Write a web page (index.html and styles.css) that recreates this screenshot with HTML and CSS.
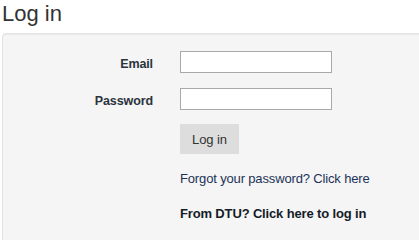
FILE: index.html
```html
<!DOCTYPE html>
<html lang="en">
<head>
<meta charset="utf-8">
<title>Log in</title>
<link rel="stylesheet" href="styles.css">
</head>
<body>
<div class="page">
  <h1 class="title">Log in</h1>
  <div class="well">
    <form class="login-form">
      <label class="field-label" for="email">Email</label>
      <input class="field-input" id="email" type="text">
      <label class="field-label" for="password">Password</label>
      <input class="field-input" id="password" type="password">
      <div class="actions">
        <button class="btn" type="button">Log in</button>
        <a class="link-forgot" href="#">Forgot your password? Click here</a>
        <a class="link-dtu" href="#">From DTU? Click here to log in</a>
      </div>
    </form>
  </div>
</div>
</body>
</html>
```

FILE: styles.css
```css
html, body {
  margin: 0;
  padding: 0;
  overflow: hidden;
  background: #ffffff;
}

body {
  font-family: "Liberation Sans", Arial, Helvetica, sans-serif;
  font-size: 13px;
  line-height: 18px;
  color: #333333;
}

.page {
  padding-left: 2px;
}

.title {
  margin: 2px 0 7px 0;
  font-size: 22px;
  line-height: 24px;
  font-weight: normal;
  color: #333333;
}

.well {
  margin-right: -12px;
  height: 212px;
  background: #f5f5f5;
  border: 1px solid #e3e3e3;
  border-radius: 4px;
  box-shadow: inset 0 1px 1px rgba(0, 0, 0, 0.05);
}

.login-form {
  display: grid;
  grid-template-columns: 150px 152px;
  column-gap: 27px;
  row-gap: 15px;
  padding-top: 17px;
  margin: 0;
}

.field-label {
  justify-self: end;
  align-self: start;
  padding-top: 4px;
  font-size: 12.5px;
  font-weight: bold;
  letter-spacing: -0.1px;
  color: #2b333d;
}

.field-input {
  box-sizing: border-box;
  width: 152px;
  height: 22px;
  margin: 0;
  padding: 1px 3px;
  border: 1px solid #a9a9a9;
  background: #ffffff;
  font: inherit;
}

.actions {
  grid-column: 2;
  display: flex;
  flex-direction: column;
  align-items: flex-start;
  margin-top: -1px;
  white-space: nowrap;
}

.btn {
  height: 30px;
  margin: 0 0 16px 0;
  padding: 0 12px;
  border: none;
  border-radius: 0;
  background: #dddddd;
  font-family: inherit;
  font-size: 13px;
  letter-spacing: -0.1px;
  color: #333333;
}

.link-forgot {
  color: #1c3358;
  text-decoration: none;
  letter-spacing: -0.15px;
  margin-bottom: 17px;
}

.link-dtu {
  color: #141c28;
  font-weight: bold;
  text-decoration: none;
  letter-spacing: -0.15px;
}
```
